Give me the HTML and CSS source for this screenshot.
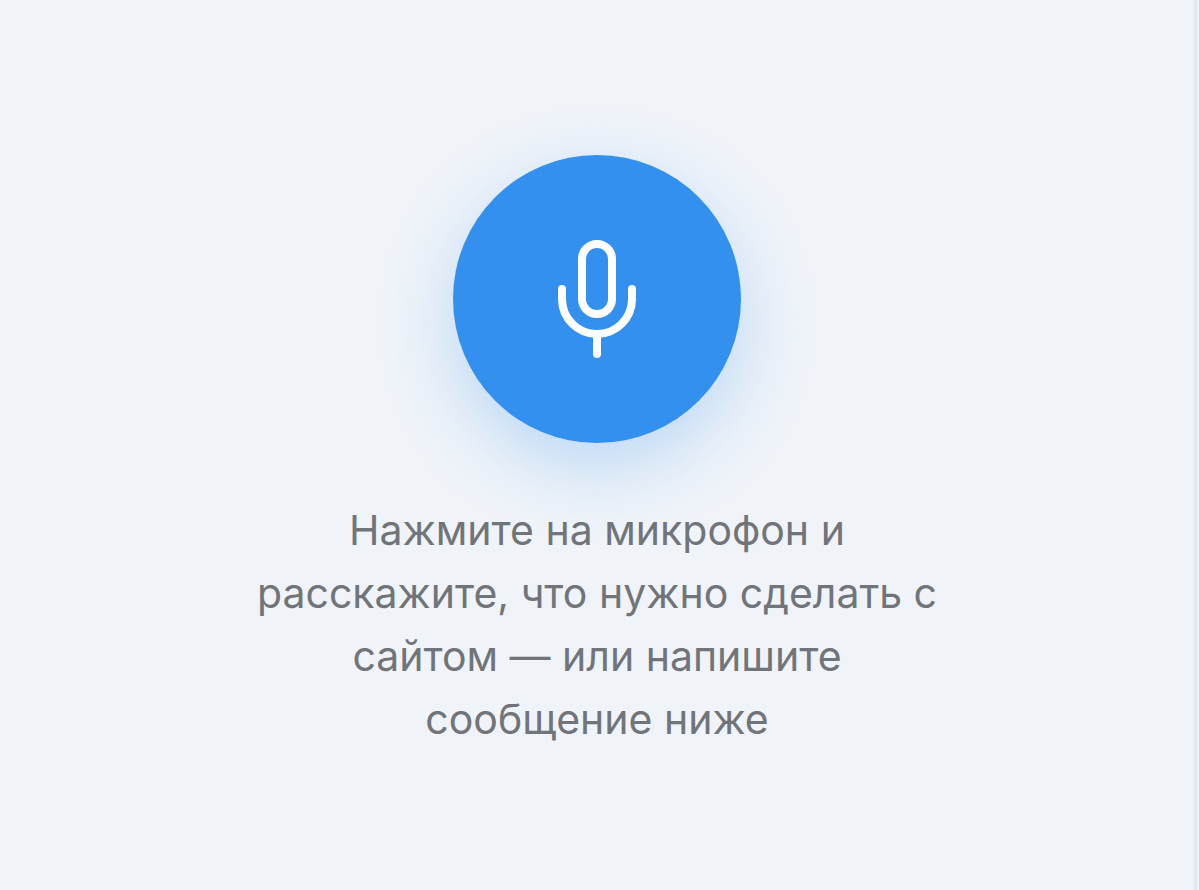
FILE: index.html
```
<!DOCTYPE html>
<html lang="ru">
<head>
    <meta charset="UTF-8">
    <meta name="viewport" content="width=device-width, initial-scale=1.0">
    <title>Голосовой помощник</title>
    <link rel="stylesheet" href="styles.css">
</head>
<body>
    <main class="voice-panel">
        <!-- Microphone Button -->
        <button type="button" class="mic-button" aria-label="Включить микрофон">
            <svg class="mic-icon" viewBox="0 0 80 120" fill="none" stroke="currentColor" stroke-width="8" stroke-linecap="round" stroke-linejoin="round" aria-hidden="true">
                <rect x="25" y="5" width="30" height="70" rx="15"/>
                <path d="M5 50v10a35 35 0 0 0 70 0V50"/>
                <path d="M40 95v20"/>
            </svg>
        </button>

        <p class="voice-hint">Нажмите на микрофон и расскажите, что нужно сделать с сайтом — или напишите сообщение ниже</p>
    </main>
</body>
</html>
```

FILE: styles.css
```
* {
    box-sizing: border-box;
}
body {
    margin: 0;
    padding-right: 2px;
    font-family: Inter, sans-serif;
    background-color: #f0f4f9;
}
.voice-panel {
    display: flex;
    flex-direction: column;
    align-items: center;
    justify-content: center;
    gap: 56px;
    min-height: 100vh;
    padding: 40px 24px 24px;
    border-right: 3px solid #e2e8f0;
}
.mic-button {
    display: flex;
    align-items: center;
    justify-content: center;
    width: 288px;
    height: 288px;
    padding: 0;
    border: none;
    border-radius: 50%;
    background-color: #3490ee;
    color: white;
    box-shadow: 0 24px 72px rgba(52, 144, 238, 0.28);
    cursor: pointer;
}
.mic-button:hover {
    background-color: #2680de;
}
.mic-icon {
    width: 80px;
    height: 120px;
}
.voice-hint {
    max-width: 700px;
    margin: 0;
    color: #717579;
    font-size: 41px;
    line-height: 63px;
    text-align: center;
}
```
